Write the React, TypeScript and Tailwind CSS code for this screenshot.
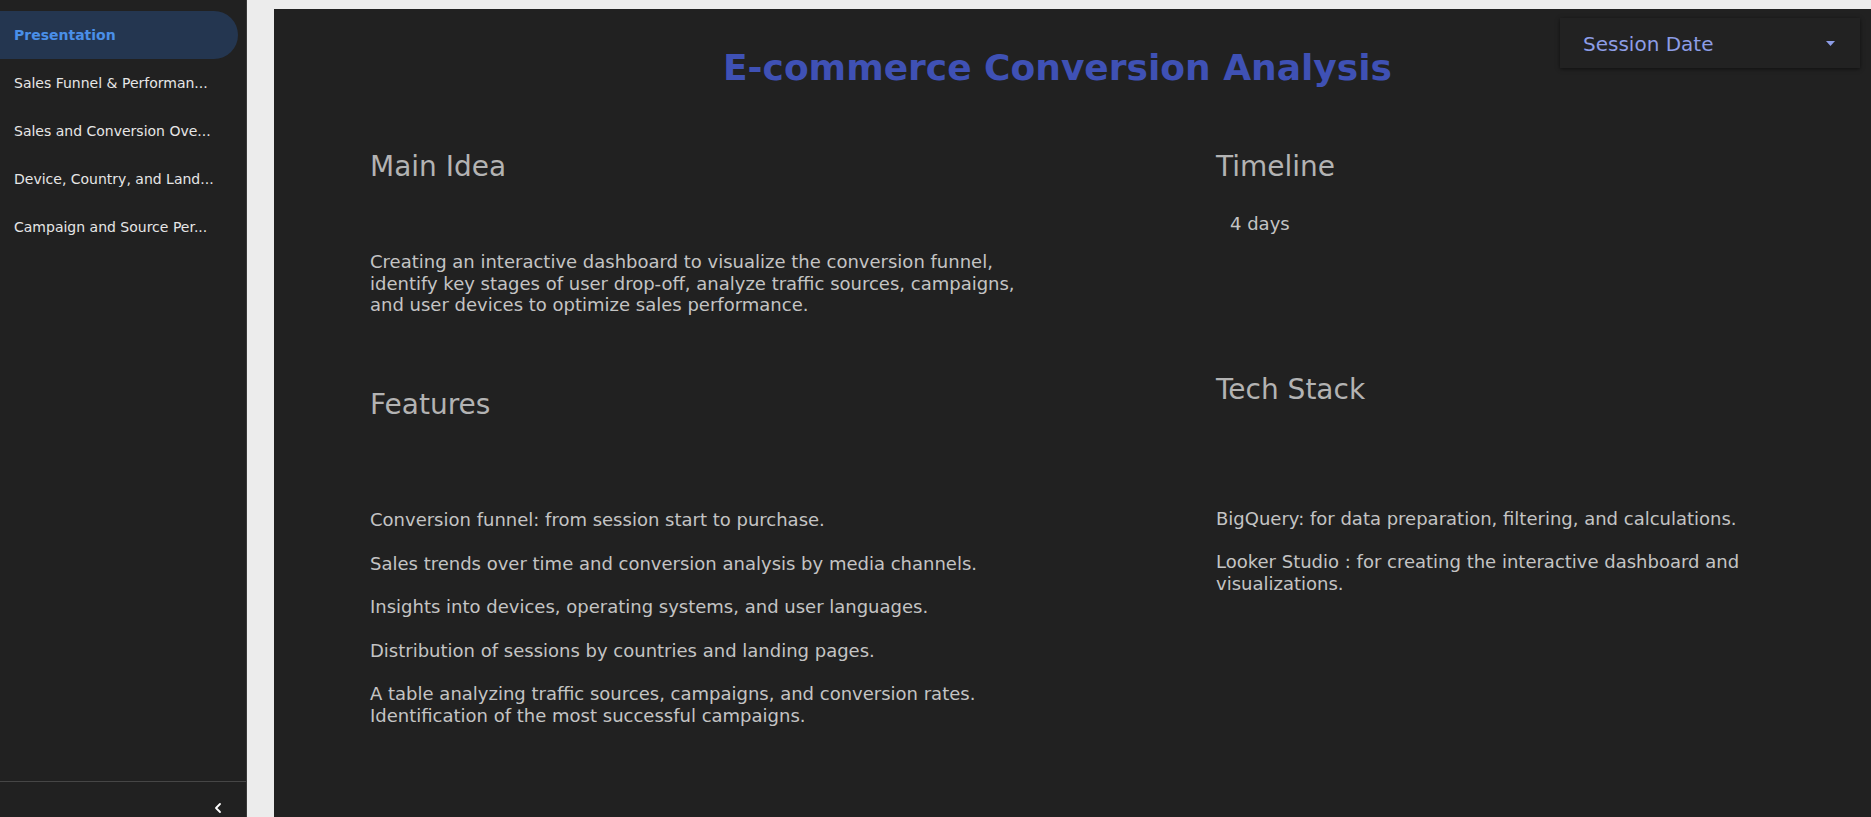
import { ChevronLeft } from "lucide-react";

const navItems = [
  "Sales Funnel & Performan...",
  "Sales and Conversion Ove...",
  "Device, Country, and Land...",
  "Campaign and Source Per...",
];

const features = [
  ["Conversion funnel: from session start to purchase."],
  ["Sales trends over time and conversion analysis by media channels."],
  ["Insights into devices, operating systems, and user languages."],
  ["Distribution of sessions by countries and landing pages."],
  [
    "A table analyzing traffic sources, campaigns, and conversion rates.",
    "Identification of the most successful campaigns.",
  ],
];

export default function App() {
  return (
    <div className="flex h-[817px] w-full overflow-hidden bg-[#ececec] font-['DejaVu_Sans',sans-serif]">
      {/* sidebar */}
      <aside className="flex w-[247px] shrink-0 flex-col border-r border-[#3a3a3a] bg-[#212121]">
        <nav className="flex flex-1 flex-col pt-[11px]">
          <div className="flex h-[48px] w-[238px] items-center rounded-r-full bg-[#243650] pl-[14px] text-[14px] font-bold text-[#4a8fe8]">
            Presentation
          </div>
          {navItems.map((item) => (
            <div key={item} className="flex h-[48px] items-center whitespace-nowrap pl-[14px] text-[14px] text-[#e6e6e6]">
              {item}
            </div>
          ))}
        </nav>
        <div className="flex h-[36px] justify-end border-t border-[#464646] pr-[20px] pt-[19px]">
          <ChevronLeft size={16} strokeWidth={2.75} className="-mt-[1px] text-white" />
        </div>
      </aside>

      {/* report */}
      <div className="flex-1 pl-[27px] pt-[9px]">
        <main className="relative h-full bg-[#212121]">
          <div className="absolute right-[11px] top-[9px] flex h-[50px] w-[300px] items-center justify-between bg-[#222222] pl-[23px] pr-[25px] shadow-[0_1px_4px_rgba(0,0,0,0.55)]">
            <span className="mt-[1px] text-[20px] text-[#8d9de6]">Session Date</span>
            <svg width="9" height="5" viewBox="0 0 9 5" className="text-[#8d9de6]">
              <path d="M0 0 L9 0 L4.5 5 Z" fill="currentColor" />
            </svg>
          </div>

          <h1 className="flex justify-center pr-[30px] pt-[38px] text-[36px] font-bold leading-[42px] text-[#3f51b5]">
            E-commerce Conversion Analysis
          </h1>

          <div className="grid grid-cols-[846px_1fr] pl-[96px] pt-[61px] text-[18px] leading-[21.7px] text-[#c4c4c4]">
            <section>
              <h2 className="text-[28px] leading-[34px] text-[#b3b3b3]">Main Idea</h2>
              <p className="mt-[67px] whitespace-nowrap">
                Creating an interactive dashboard to visualize the conversion funnel,
                <br />
                identify key stages of user drop-off, analyze traffic sources, campaigns,
                <br />
                and user devices to optimize sales performance.
              </p>
              <h2 className="mt-[72px] text-[28px] leading-[34px] text-[#b3b3b3]">Features</h2>
              <div className="mt-[87px] flex flex-col gap-[21.8px] whitespace-nowrap">
                {features.map((lines) => (
                  <p key={lines[0]}>
                    {lines.map((l) => (
                      <span key={l} className="block">
                        {l}
                      </span>
                    ))}
                  </p>
                ))}
              </div>
            </section>

            <section>
              <h2 className="text-[28px] leading-[34px] text-[#b3b3b3]">Timeline</h2>
              <p className="mt-[29px] pl-[14px]">4 days</p>
              <h2 className="mt-[138px] text-[28px] leading-[34px] text-[#b3b3b3]">Tech Stack</h2>
              <div className="mt-[101px] flex flex-col gap-[21.8px] whitespace-nowrap">
                <p>BigQuery: for data preparation, filtering, and calculations.</p>
                <p>
                  Looker Studio : for creating the interactive dashboard and
                  <br />
                  visualizations.
                </p>
              </div>
            </section>
          </div>
        </main>
      </div>
    </div>
  );
}
